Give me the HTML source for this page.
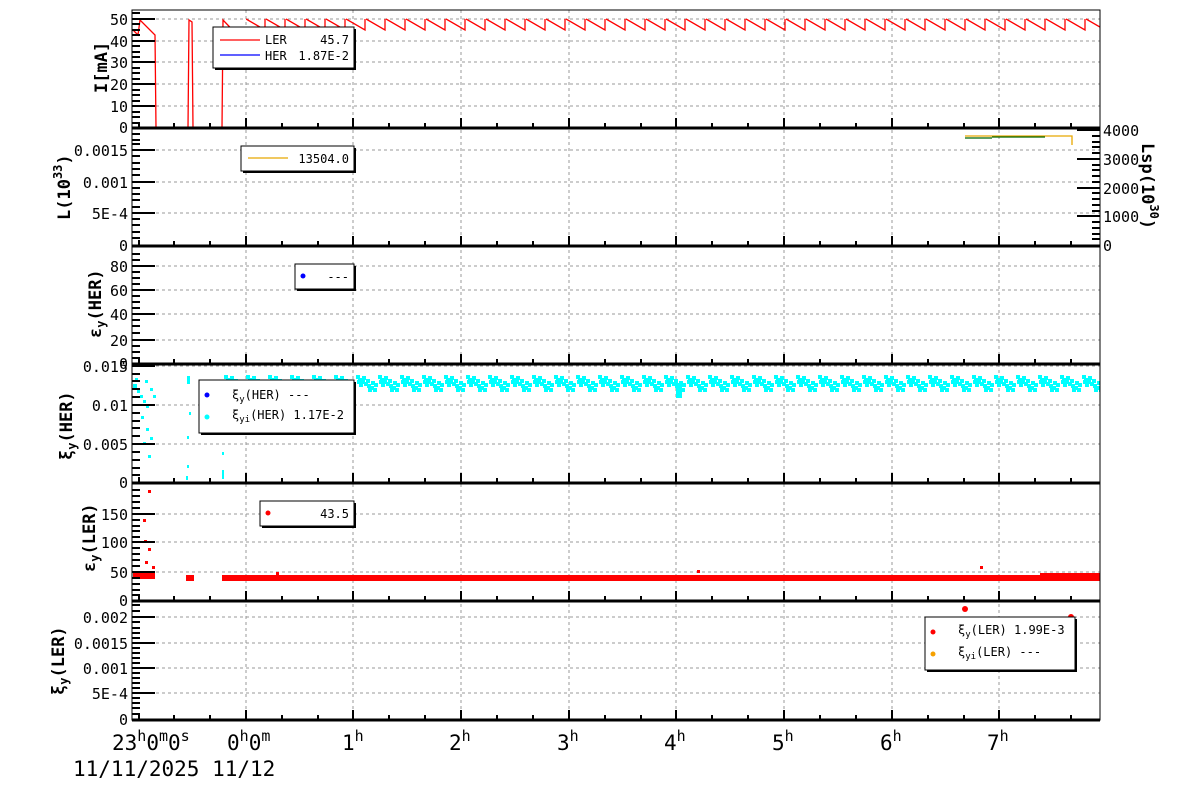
<!DOCTYPE html>
<html><head><meta charset="utf-8"><style>
html,body{margin:0;padding:0;background:#fff;width:1200px;height:798px;overflow:hidden}
svg{display:block}
text{font-family:"DejaVu Sans Mono","Liberation Mono",monospace;fill:#000}
.t{font-size:15px}
.g{stroke:#999;stroke-width:1;stroke-dasharray:3,3}
.k3{stroke:#000;stroke-width:3}
</style></head><body>
<svg width="1200" height="798" viewBox="0 0 1200 798" xmlns="http://www.w3.org/2000/svg">
<defs>
<pattern id="saw" x="246" y="0" width="20" height="40" patternUnits="userSpaceOnUse">
<path d="M0,19 L19,30 L19,19" fill="none" stroke="#f00" stroke-width="1.3"/>
</pattern>
<pattern id="cy" x="246" y="370" width="22" height="30" patternUnits="userSpaceOnUse">
<g fill="#0ff"><rect x="0" y="5" width="4" height="4"/><rect x="2" y="8" width="4" height="4"/><rect x="5" y="10" width="4" height="4"/><rect x="8" y="12" width="4" height="4"/><rect x="11" y="14" width="4" height="4"/><rect x="14" y="16" width="4" height="4"/><rect x="17" y="18" width="4" height="4"/><rect x="3" y="13" width="4" height="4"/><rect x="10" y="9" width="4" height="4"/><rect x="18" y="13" width="4" height="4"/><rect x="6" y="6" width="4" height="4"/><rect x="15" y="11" width="4" height="4"/><rect x="1" y="10" width="4" height="4"/><rect x="12" y="18" width="4" height="4"/></g>
</pattern>
</defs>

<g class="g">
<path d="M246,10V720M353,10V720M461,10V720M569,10V720M676,10V720M784,10V720M892,10V720M999,10V720"/>
<path d="M132,19H1100M132,41H1100M132,62H1100M132,84H1100M132,106H1100"/>
<path d="M132,150H1100M132,182H1100M132,213H1100"/>
<path d="M132,266H1100M132,290H1100M132,314H1100M132,340H1100"/>
<path d="M132,366H1100M132,405H1100M132,444H1100"/>
<path d="M132,514H1100M132,542H1100M132,572H1100"/>
<path d="M132,617H1100M132,643H1100M132,668H1100M132,693H1100"/>
</g>

<rect x="246" y="15" width="854" height="20" fill="url(#saw)"/>
<path d="M133,30 L138,35 L140,20 L155,35 L156,128 L188,128 L189,20 L192,22 L193,128 L222,128 L223,20 L246,44" fill="none" stroke="#f00" stroke-width="1.3"/>
<path d="M132,128H1100" stroke="#00f" stroke-width="2"/>
<path d="M965,136H1072V145" fill="none" stroke="#e8a800" stroke-width="1.3"/>
<path d="M965,138H992M992,137H1045" fill="none" stroke="#060" stroke-width="1.3"/>
<rect x="222" y="372" width="878" height="24" fill="url(#cy)"/>
<g fill="#0ff">
<rect x="133" y="384" width="4" height="4"/><rect x="137" y="390" width="3" height="3"/><rect x="140" y="395" width="3" height="3"/><rect x="143" y="400" width="3" height="3"/><rect x="146" y="405" width="3" height="3"/><rect x="150" y="388" width="3" height="3"/><rect x="153" y="395" width="3" height="3"/><rect x="143" y="442" width="3" height="3"/><rect x="148" y="455" width="3" height="3"/><rect x="150" y="437" width="3" height="3"/><rect x="141" y="416" width="3" height="3"/><rect x="146" y="428" width="3" height="3"/><rect x="135" y="378" width="3" height="3"/><rect x="145" y="380" width="3" height="3"/>
<rect x="187" y="376" width="3" height="8"/><rect x="189" y="412" width="2" height="3"/><rect x="187" y="436" width="2" height="3"/><rect x="187" y="465" width="2" height="3"/><rect x="186" y="476" width="2" height="4"/>
<rect x="222" y="427" width="2" height="3"/><rect x="222" y="452" width="2" height="3"/><rect x="222" y="470" width="2" height="9"/>
<rect x="676" y="383" width="6" height="15"/>
</g>
<rect x="222" y="575" width="878" height="6" fill="#f00"/>
<g fill="#f00">
<rect x="133" y="572" width="22" height="7"/><rect x="148" y="490" width="3" height="3"/><rect x="143" y="519" width="3" height="3"/><rect x="144" y="540" width="3" height="3"/><rect x="148" y="548" width="3" height="3"/><rect x="145" y="561" width="3" height="3"/><rect x="152" y="566" width="3" height="3"/><rect x="186" y="575" width="8" height="6"/><rect x="276" y="572" width="3" height="3"/><rect x="697" y="570" width="3" height="3"/><rect x="980" y="566" width="3" height="3"/><rect x="1040" y="573" width="60" height="4"/>
</g>
<circle cx="965" cy="609" r="3" fill="#f00"/><circle cx="1071" cy="617" r="3" fill="#f00"/>

<rect x="132" y="10" width="968" height="710" fill="none" stroke="#000" stroke-width="1"/>
<g class="k3"><path d="M132,128H1100M132,246H1100M132,364H1100M132,483H1100M132,601H1100M132,720H1100"/></g>

<g stroke="#000" stroke-width="2">
<path id="xt" d="M139,128v-6M174,128v-5M210,128v-5M246,128v-10M282,128v-5M318,128v-5M353,128v-10M389,128v-5M425,128v-5M461,128v-10M497,128v-5M533,128v-5M569,128v-10M605,128v-5M641,128v-5M676,128v-10M712,128v-5M748,128v-5M784,128v-10M820,128v-5M856,128v-5M892,128v-10M928,128v-5M964,128v-5M999,128v-10M1035,128v-5M1071,128v-5"/>
<use href="#xt" y="118"/><use href="#xt" y="236"/><use href="#xt" y="355"/><use href="#xt" y="473"/><use href="#xt" y="592"/>
</g>
<g stroke="#000" stroke-width="2">
<path d="M132,19h23M132,41h23M132,62h23M132,84h23M132,106h23M132,13h8M132,24h8M132,30h8M132,35h8M132,46h8M132,52h8M132,57h8M132,68h8M132,73h8M132,79h8M132,90h8M132,95h8M132,101h8M132,112h8M132,117h8M132,123h8"/>
<path d="M132,150h23M132,182h23M132,213h23M132,134h8M132,140h8M132,144h8M132,156h8M132,163h8M132,169h8M132,175h8M132,188h8M132,194h8M132,200h8M132,207h8M132,219h8M132,225h8M132,232h8M132,238h8"/>
<path d="M132,266h23M132,290h23M132,314h23M132,340h23M132,254h8M132,260h8M132,272h8M132,278h8M132,284h8M132,296h8M132,302h8M132,308h8M132,320h8M132,326h8M132,333h8M132,346h8M132,352h8M132,358h8"/>
<path d="M132,366h23M132,405h23M132,444h23M132,374h8M132,381h8M132,389h8M132,397h8M132,413h8M132,421h8M132,428h8M132,436h8M132,452h8M132,460h8M132,468h8M132,475h8"/>
<path d="M132,514h23M132,542h23M132,572h23M132,490h8M132,496h8M132,502h8M132,508h8M132,520h8M132,526h8M132,531h8M132,537h8M132,548h8M132,554h8M132,560h8M132,566h8M132,578h8M132,584h8M132,590h8M132,595h8"/>
<path d="M132,617h23M132,643h23M132,668h23M132,693h23M132,605h8M132,611h8M132,622h8M132,628h8M132,633h8M132,638h8M132,648h8M132,653h8M132,658h8M132,663h8M132,673h8M132,678h8M132,683h8M132,688h8M132,698h8M132,703h8M132,708h8M132,714h8"/>
<path d="M1100,130h-23M1100,159h-23M1100,188h-23M1100,216h-23M1100,136h-8M1100,142h-8M1100,147h-8M1100,153h-8M1100,165h-8M1100,170h-8M1100,176h-8M1100,182h-8M1100,193h-8M1100,199h-8M1100,205h-8M1100,211h-8M1100,222h-8M1100,228h-8M1100,234h-8M1100,239h-8"/>
</g>

<g class="t" text-anchor="end">
<text x="128" y="25">50</text><text x="128" y="47">40</text><text x="128" y="68">30</text><text x="128" y="90">20</text><text x="128" y="112">10</text><text x="128" y="133">0</text>
<text x="128" y="156">0.0015</text><text x="128" y="188">0.001</text><text x="128" y="219">5E-4</text><text x="128" y="251">0</text>
<text x="128" y="272">80</text><text x="128" y="296">60</text><text x="128" y="320">40</text><text x="128" y="346">20</text><text x="128" y="369">0</text>
<text x="128" y="372">0.015</text><text x="128" y="411">0.01</text><text x="128" y="450">0.005</text><text x="128" y="488">0</text>
<text x="128" y="520">150</text><text x="128" y="548">100</text><text x="128" y="578">50</text><text x="128" y="606">0</text>
<text x="128" y="623">0.002</text><text x="128" y="649">0.0015</text><text x="128" y="674">0.001</text><text x="128" y="699">5E-4</text><text x="128" y="725">0</text>
</g>
<g class="t"><text x="1103" y="136">4000</text><text x="1103" y="165">3000</text><text x="1103" y="194">2000</text><text x="1103" y="222">1000</text><text x="1103" y="251">0</text></g>

<g font-size="17" font-weight="bold">
<text transform="translate(107,93) rotate(-90)">I[mA]</text>
<text transform="translate(70,220) rotate(-90)">L(10<tspan font-size="12" dy="-8">33</tspan><tspan dy="8">)</tspan></text>
<text transform="translate(101,338) rotate(-90)">ε<tspan font-size="12" dy="4">y</tspan><tspan dy="-4">(HER)</tspan></text>
<text transform="translate(72,460) rotate(-90)">ξ<tspan font-size="12" dy="4">y</tspan><tspan dy="-4">(HER)</tspan></text>
<text transform="translate(95,572) rotate(-90)">ε<tspan font-size="12" dy="4">y</tspan><tspan dy="-4">(LER)</tspan></text>
<text transform="translate(64,695) rotate(-90)">ξ<tspan font-size="12" dy="4">y</tspan><tspan dy="-4">(LER)</tspan></text>
<text transform="translate(1142,143) rotate(90)">Lsp(10<tspan font-size="12" dy="-8">30</tspan><tspan dy="8">)</tspan></text>
</g>

<g font-size="21">
<text x="112" y="750">23<tspan font-size="15" dy="-9">h</tspan><tspan dy="9">0</tspan><tspan font-size="15" dy="-9">m</tspan><tspan dy="9">0</tspan><tspan font-size="15" dy="-9">s</tspan></text>
<text x="227" y="750">0<tspan font-size="15" dy="-9">h</tspan><tspan dy="9">0</tspan><tspan font-size="15" dy="-9">m</tspan></text>
<text x="342" y="750">1<tspan font-size="15" dy="-9">h</tspan></text>
<text x="449" y="750">2<tspan font-size="15" dy="-9">h</tspan></text>
<text x="557" y="750">3<tspan font-size="15" dy="-9">h</tspan></text>
<text x="664" y="750">4<tspan font-size="15" dy="-9">h</tspan></text>
<text x="772" y="750">5<tspan font-size="15" dy="-9">h</tspan></text>
<text x="880" y="750">6<tspan font-size="15" dy="-9">h</tspan></text>
<text x="987" y="750">7<tspan font-size="15" dy="-9">h</tspan></text>
<text x="73" y="776">11/11/2025 11/12</text>
</g>

<g font-size="12">
<rect x="215" y="29" width="141" height="41" fill="#000"/><rect x="213" y="27" width="141" height="41" fill="#fff" stroke="#000"/>
<path d="M220,40H260" stroke="#f00" stroke-width="1.3"/><path d="M220,55H260" stroke="#00f" stroke-width="1.3"/>
<text x="265" y="44">LER</text><text x="349" y="44" text-anchor="end">45.7</text>
<text x="265" y="60">HER</text><text x="349" y="60" text-anchor="end">1.87E-2</text>

<rect x="243" y="148" width="113" height="25" fill="#000"/><rect x="241" y="146" width="113" height="25" fill="#fff" stroke="#000"/>
<path d="M248,158H288" stroke="#e8a800" stroke-width="1.3"/>
<text x="349" y="163" text-anchor="end">13504.0</text>

<rect x="297" y="266" width="59" height="25" fill="#000"/><rect x="295" y="264" width="59" height="25" fill="#fff" stroke="#000"/>
<circle cx="303" cy="276" r="2.5" fill="#00f"/><text x="349" y="281" text-anchor="end">---</text>

<rect x="201" y="382" width="155" height="53" fill="#000"/><rect x="199" y="380" width="155" height="53" fill="#fff" stroke="#000"/>
<circle cx="207" cy="395" r="2.5" fill="#00f"/><circle cx="207" cy="417" r="2.5" fill="#0ff"/>
<text x="232" y="399">ξ<tspan font-size="9" dy="3">y</tspan><tspan dy="-3">(HER) ---</tspan></text>
<text x="232" y="419">ξ<tspan font-size="9" dy="3">yi</tspan><tspan dy="-3">(HER)  1.17E-2</tspan></text>

<rect x="262" y="503" width="94" height="25" fill="#000"/><rect x="260" y="501" width="94" height="25" fill="#fff" stroke="#000"/>
<circle cx="268" cy="513" r="2.5" fill="#f00"/><text x="349" y="518" text-anchor="end">43.5</text>

<rect x="927" y="619" width="150" height="53" fill="#000"/><rect x="925" y="617" width="150" height="53" fill="#fff" stroke="#000"/>
<circle cx="933" cy="632" r="2.5" fill="#f00"/><circle cx="933" cy="654" r="2.5" fill="#f5a000"/>
<text x="958" y="634">ξ<tspan font-size="9" dy="3">y</tspan><tspan dy="-3">(LER)  1.99E-3</tspan></text>
<text x="958" y="656">ξ<tspan font-size="9" dy="3">yi</tspan><tspan dy="-3">(LER) ---</tspan></text>
</g>
</svg>
</body></html>
